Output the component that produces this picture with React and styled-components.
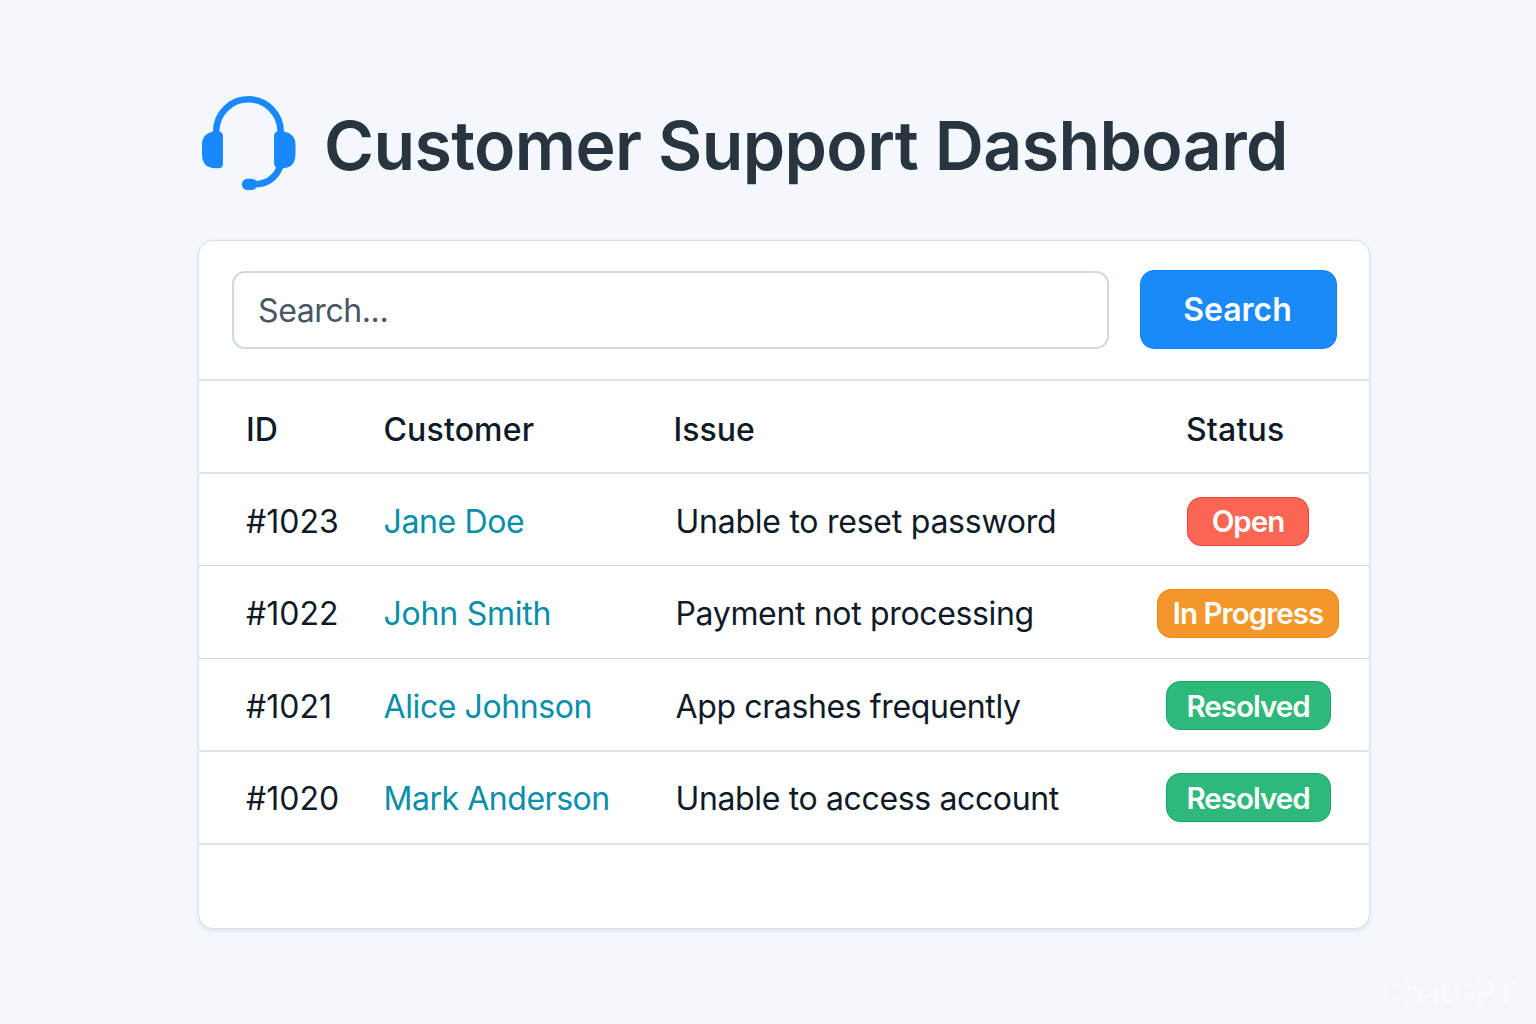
import React from "react";
import styled, { createGlobalStyle } from "styled-components";

const GlobalStyle = createGlobalStyle`
  * { box-sizing: border-box; }
  body {
    margin: 0;
    background: #f4f8fc;
    font-family: Inter, "Liberation Sans", sans-serif;
    color: #0f1a29;
  }
`;

const Page = styled.main`
  position: relative;
  width: 1536px;
  height: 1024px;
  padding: 94px 0 0 198px;
  overflow: hidden;
`;

const Header = styled.header`
  display: flex;
  align-items: center;
  gap: 26px;
  height: 98px;
  padding-left: 2px;
`;

const Title = styled.h1`
  margin: 0;
  padding-top: 3px;
  font-size: 68px;
  line-height: 80px;
  font-weight: 600;
  letter-spacing: -0.6px;
  color: #28343f;
  white-space: nowrap;
`;

const Card = styled.section`
  width: 1172px;
  height: 689px;
  margin-top: 48px;
  background: #fff;
  border: 1px solid #d6e0ea;
  border-radius: 15px;
  box-shadow: 0 2px 5px rgba(60, 90, 120, 0.12);
`;

const SearchBar = styled.form`
  display: flex;
  align-items: center;
  gap: 31px;
  height: 140px;
  padding: 0 32px 2px 33px;
  border-bottom: 2px solid #dfe5ed;
`;

const SearchInput = styled.input`
  flex: 1;
  min-width: 0;
  height: 78px;
  margin-top: 1px;
  padding: 2px 24px 0 24px;
  border: 2px solid #ccd9e4;
  border-radius: 13px;
  outline: none;
  background: #fff;
  font: 400 32px/40px Inter, sans-serif;
  letter-spacing: -0.4px;
  color: #475766;
  &::placeholder { color: #475766; opacity: 1; }
`;

const SearchButton = styled.button`
  width: 197px;
  height: 79px;
  padding: 2px 2px 0 0;
  border: 1px solid #0f80fa;
  border-radius: 14px;
  background: #1b8af9;
  color: #fff;
  font: 600 32px/40px Inter, sans-serif;
`;

const Row = styled.div`
  display: grid;
  grid-template-columns: 137.5px 292px 476.5px 1fr;
  align-items: center;
  height: ${(p) => p.$height}px;
  padding: ${(p) => p.$top ?? 4}px 0 0 47px;
  border-bottom: ${(p) => (p.$soft ? "2px solid #dfe5ed" : "1px solid #cbd7e3")};
`;

const Cell = styled.div`
  font-size: 32px;
  line-height: 40px;
  font-weight: 400;
  letter-spacing: ${(p) => p.$tracking || 0}px;
  color: ${(p) => (p.$link ? "#078ea9" : "#0f1a29")};
  white-space: nowrap;
`;

const HeadCell = styled(Cell)`
  font-weight: 500;
`;

const IssueHead = styled(HeadCell)`
  margin-left: -2px;
`;

const StatusHead = styled(HeadCell)`
  padding-left: 34px;
`;

const StatusCell = styled.div`
  display: flex;
  justify-content: center;
  width: 192px;
  padding-bottom: ${(p) => p.$lift}px;
`;

const tones = {
  open: ["#fa6554", "#f04535", 122],
  progress: ["#f4972a", "#ee860f", 182],
  resolved: ["#2fb87b", "#16a865", 165],
};

const Badge = styled.span`
  display: flex;
  align-items: center;
  justify-content: center;
  width: ${(p) => tones[p.$tone][2]}px;
  height: 49px;
  padding-top: ${(p) => p.$top}px;
  padding-bottom: 2px;
  border: 1px solid ${(p) => tones[p.$tone][1]};
  border-radius: 14px;
  background: ${(p) => tones[p.$tone][0]};
  color: #fff;
  font-size: 29.5px;
  line-height: 36px;
  font-weight: 600;
  letter-spacing: -0.98px;
  white-space: nowrap;
`;

const Watermark = styled.div`
  position: absolute;
  right: 20px;
  bottom: 11px;
  font-size: 32px;
  line-height: 40px;
  font-weight: 700;
  letter-spacing: -0.5px;
  color: #f8fafd;
`;

const Headset = () => (
  <svg width="98" height="98" viewBox="0 0 98 98" fill="#1a88fd">
    <path
      d="M16.200 42V37.500a32.200 32.200 0 0 1 64.400 0V42"
      fill="none"
      stroke="#1a88fd"
      strokeWidth="6.600"
    />
    <path d="M13 37.600q6.500-1 8.500 1 1.500 1.200 1.500 3.400v27.500q0 4.700-4 4.700h-3.500q-13.500-.2-13.500-14v-10q0-10 11-12.600z" />
    <path d="M84.300 37.600q-7-1-9 1-1.300 1.200-1.300 3.400v26.500q0 5.600 4.500 5.700h3.500q13.500-.2 13.500-14v-10q0-10-11.200-12.600z" />
    <path
      d="M80.400 72Q73.500 89.500 56 90.200"
      fill="none"
      stroke="#1a88fd"
      strokeWidth="6.600"
    />
    <rect x="42" y="84.700" width="15" height="11.300" rx="5.200" />
  </svg>
);

const tickets = [
  { id: "#1023", customer: "Jane Doe", nameTracking: -0.37, issue: "Unable to reset password", issueTracking: -0.25, status: "Open", tone: "open", height: 92, lift: 0, badgeTop: 0 },
  { id: "#1022", customer: "John Smith", nameTracking: -0.22, issue: "Payment not processing", issueTracking: -0.34, status: "In Progress", tone: "progress", height: 93, lift: 2, badgeTop: 2 },
  { id: "#1021", customer: "Alice Johnson", nameTracking: -0.4, issue: "App crashes frequently", issueTracking: -0.38, status: "Resolved", tone: "resolved", height: 93, lift: 3, badgeTop: 3, soft: true },
  { id: "#1020", customer: "Mark Anderson", nameTracking: -0.46, issue: "Unable to access account", issueTracking: -0.36, status: "Resolved", tone: "resolved", height: 93, top: 2, lift: 3, badgeTop: 3, soft: true },
];

export default function App() {
  return (
    <>
      <GlobalStyle />
      <Page>
        <Header>
          <Headset />
          <Title>Customer Support Dashboard</Title>
        </Header>
        <Card>
          <SearchBar onSubmit={(e) => e.preventDefault()}>
            <SearchInput placeholder="Search..." />
            <SearchButton type="submit">Search</SearchButton>
          </SearchBar>
          <Row $height={93} $top={7} $soft>
            <HeadCell>ID</HeadCell>
            <HeadCell $tracking={0.15}>Customer</HeadCell>
            <IssueHead>Issue</IssueHead>
            <StatusHead $tracking={0.2}>Status</StatusHead>
          </Row>
          {tickets.map((t) => (
            <Row key={t.id} $height={t.height} $top={t.top} $soft={t.soft}>
              <Cell>{t.id}</Cell>
              <Cell $link $tracking={t.nameTracking}>{t.customer}</Cell>
              <Cell $tracking={t.issueTracking}>{t.issue}</Cell>
              <StatusCell $lift={t.lift}>
                <Badge $tone={t.tone} $top={t.badgeTop}>{t.status}</Badge>
              </StatusCell>
            </Row>
          ))}
        </Card>
        <Watermark>ChatGPT</Watermark>
      </Page>
    </>
  );
}
